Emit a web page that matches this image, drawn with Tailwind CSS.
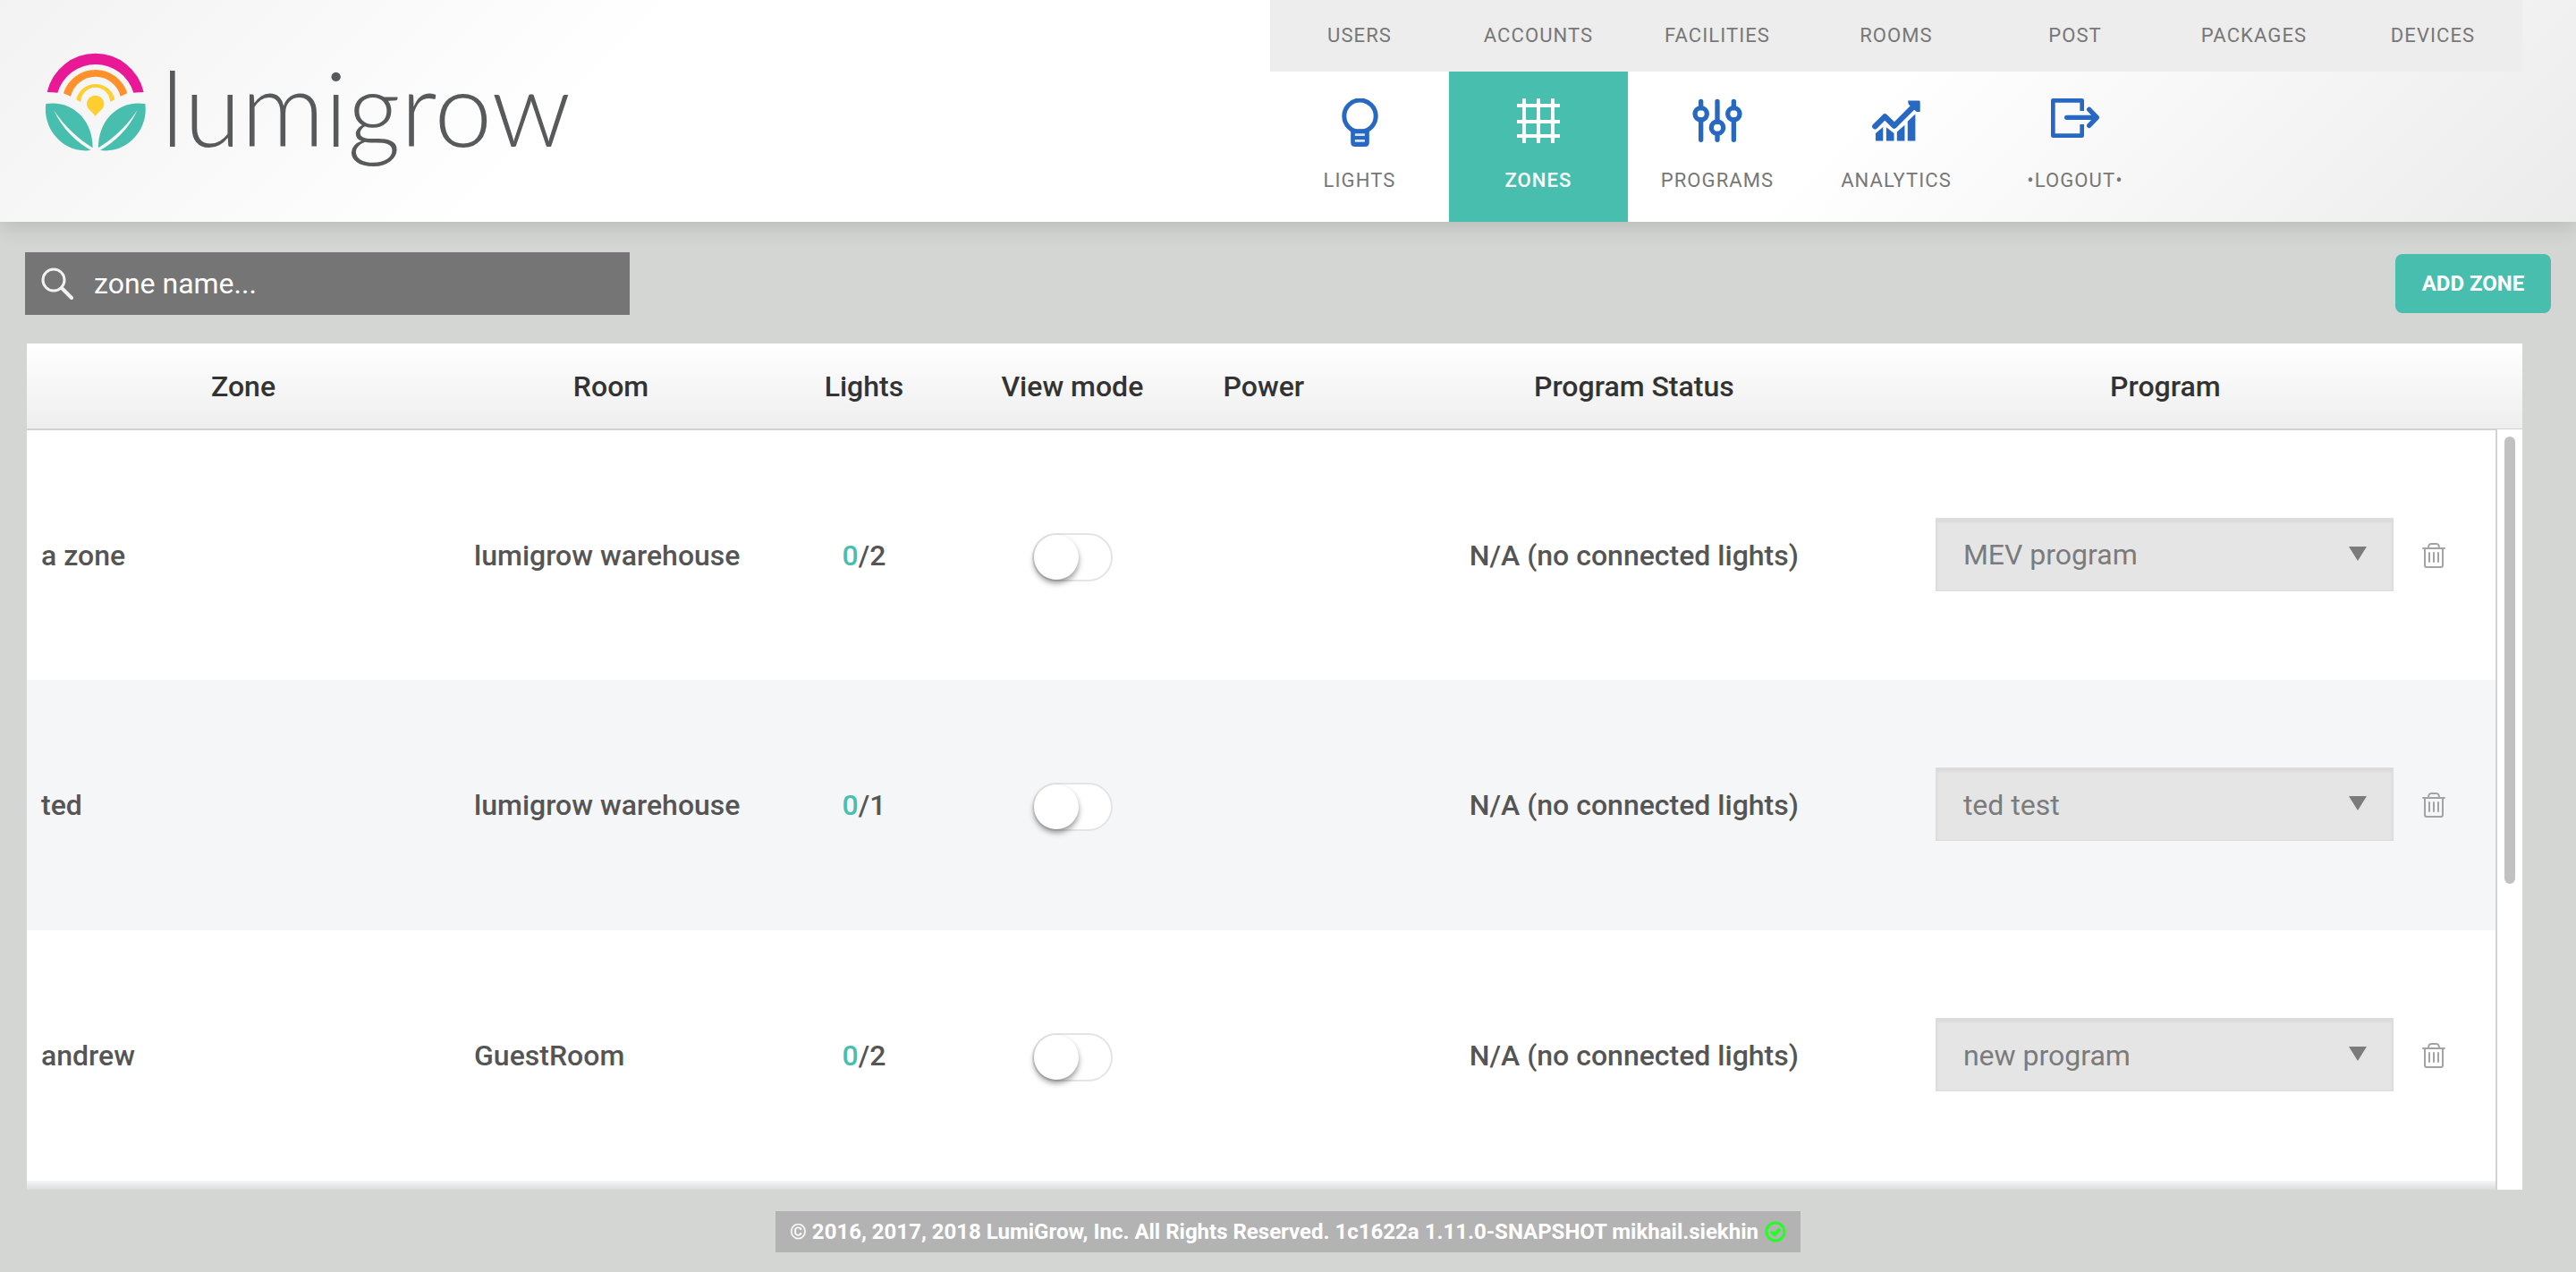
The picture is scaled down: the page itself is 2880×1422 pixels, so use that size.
<!DOCTYPE html>
<html lang="en">
<head>
<meta charset="utf-8">
<meta name="viewport" content="width=device-width, initial-scale=1">
<title>LumiGrow - Zones</title>
<script src="https://cdn.jsdelivr.net/npm/@tailwindcss/browser@4"></script>
</head>
<body class="flex min-h-screen flex-col bg-[#d4d6d4] font-['Roboto',sans-serif] text-[#555]">

<header class="relative flex justify-between bg-[linear-gradient(135deg,#f2f2f2_0%,#fff_25%,#fff_70%,#ebebeb_100%)] pr-[60px] shadow-[0_4px_24px_rgba(0,0,0,0.15)]">
  <a href="#" class="flex items-start pt-[50px] pl-10" aria-label="lumigrow">
    <svg class="h-[130px] w-[140px]" viewBox="0 0 420 390" aria-hidden="true">
      <path d="M38 159A166 166 0 0 1 362 159Q344 160 328 161A133 133 0 0 0 73 161Q56 160 38 159Z" fill="#e81896"/>
      <path d="M93 163A112 112 0 0 1 307 163L284 173A86 86 0 0 0 117 173Z" fill="#ff912d"/>
      <path d="M136 184A66 66 0 0 1 265 184L249 192A49 49 0 0 0 151 192Z" fill="#ffce2f"/>
      <path d="M200 170C217 170 229 183 229 198C229 218 210 222 200 240C190 222 171 218 171 198C171 183 183 170 200 170Z" fill="#ffce2f"/>
      <path d="M34 198C120 184 192 250 191 346C150 320 100 280 60 219C90 284 135 325 185 354C95 366 22 285 34 198Z" fill="#48beae"/>
      <path d="M367 198C281 184 209 250 210 346C251 320 301 280 341 219C311 284 266 325 216 354C306 366 379 285 367 198Z" fill="#48beae"/>
    </svg>
    <span class="font-['Lato',sans-serif] text-[116px] leading-[140px] font-light text-[#58595b]">lumigrow</span>
  </a>

  <nav class="w-[1400px] text-[22px] leading-7 tracking-wider text-[#777]">
    <ul class="grid h-20 grid-cols-7 items-center bg-[#ededed] text-center">
      <li><a href="#">USERS</a></li>
      <li><a href="#">ACCOUNTS</a></li>
      <li><a href="#">FACILITIES</a></li>
      <li><a href="#">ROOMS</a></li>
      <li><a href="#">POST</a></li>
      <li><a href="#">PACKAGES</a></li>
      <li><a href="#">DEVICES</a></li>
    </ul>
    <ul class="grid h-[168px] grid-cols-7 text-center">
      <li><a href="#" class="flex h-full flex-col items-center gap-6 pt-[30px]">
        <span class="h-[54px]"><svg class="h-[54px] w-[41px]" viewBox="60 45 122 162" fill="none" stroke="#2768c2" aria-hidden="true">
          <circle cx="121" cy="104" r="53" stroke-width="15"/>
          <path d="M90 148H152V192Q152 207 138 207H104Q90 207 90 192Z" fill="#2768c2" stroke="none"/>
          <path d="M104 167H137M104 187H137" stroke="#d9e6f8" stroke-width="8"/>
        </svg></span>LIGHTS</a></li>
      <li><a href="#" aria-current="page" class="flex h-full flex-col items-center gap-6 bg-[#48beae] pt-[30px] font-medium text-white">
        <span class="h-[54px]"><svg class="h-[50px] w-12" viewBox="0 0 144 150" fill="none" stroke="#fff" stroke-width="12" aria-hidden="true">
          <path d="M24 0V150M72 0V150M120 0V150M0 24H144M0 78H144M0 126H144"/>
        </svg></span>ZONES</a></li>
      <li><a href="#" class="flex h-full flex-col items-center gap-6 pt-[30px]">
        <span class="h-[54px]"><svg class="h-[50px] w-14" viewBox="1235 45 168 150" fill="none" stroke="#2768c2" stroke-width="16" stroke-linecap="round" aria-hidden="true">
          <circle cx="1264" cy="97" r="20"/><circle cx="1319" cy="143" r="20"/><circle cx="1374" cy="97" r="20"/>
          <path d="M1264 55V77M1264 117V184M1319 55V123M1319 163V184M1374 55V77M1374 117V184"/>
        </svg></span>PROGRAMS</a></li>
      <li><a href="#" class="flex h-full flex-col items-center gap-6 pt-[30px]">
        <span class="h-[54px]"><svg class="h-[50px] w-[54px]" viewBox="156 45 163 150" fill="#2768c2" aria-hidden="true">
          <path d="M166 139L199 106L231 137L300 68" fill="none" stroke="#2768c2" stroke-width="19" stroke-linecap="round" stroke-linejoin="round"/>
          <path d="M277 52H314Q318 52 318 56V90L306 90L279 64Z"/>
          <path d="M168 162L193 141V188H168ZM204 142L230 162V188H204ZM240 158L266 134V188H240ZM276 122L302 97V188H276Z"/>
        </svg></span>ANALYTICS</a></li>
      <li><a href="#" class="flex h-full flex-col items-center gap-6 pt-[30px]">
        <span class="h-[54px]"><svg class="h-[44px] w-[54px]" viewBox="762 45 162 132" fill="none" stroke="#2768c2" stroke-width="14" stroke-linejoin="round" aria-hidden="true">
          <path d="M866 87V52H769V170H866V132"/>
          <path d="M815 109H914M890 82L916 109L890 136" stroke-width="16" stroke-linecap="round"/>
        </svg></span>•LOGOUT•</a></li>
    </ul>
  </nav>
</header>

<main class="flex flex-col">
  <div class="flex items-center justify-between px-7 pt-[34px] pb-8">
    <label class="flex h-[70px] w-[676px] items-center gap-[23px] bg-[#757575] pl-[18px]">
      <svg class="size-9 shrink-0" viewBox="0 0 36 36" fill="none" stroke="#f2f2f2" stroke-linecap="round" aria-hidden="true">
        <circle cx="14" cy="14" r="12" stroke-width="3"/><path d="M23 23L34 34" stroke-width="4"/>
      </svg>
      <input type="text" placeholder="zone name..." aria-label="Zone name" class="min-w-0 flex-1 bg-transparent text-[32px] leading-10 text-white outline-none placeholder:text-white">
    </label>
    <button type="button" class="h-[66px] w-[174px] rounded-lg bg-[#48beae] text-2xl font-bold text-white">ADD ZONE</button>
  </div>

  <section class="relative mr-[60px] ml-[30px]">
    <table class="w-full table-fixed text-left text-[32px] leading-10 font-medium">
      <colgroup>
        <col class="w-[17.35%]"><col class="w-[12.11%]"><col class="w-[8.17%]"><col class="w-[8.53%]"><col class="w-[6.81%]"><col class="w-[22.87%]"><col class="w-[19.71%]"><col>
      </colgroup>
      <thead class="bg-linear-to-b from-white to-[#eee] text-center text-[#333]">
        <tr class="h-24 border-b-2 border-[#d2d2d2]">
          <th class="font-medium">Zone</th>
          <th class="font-medium">Room</th>
          <th class="font-medium">Lights</th>
          <th class="font-medium">View mode</th>
          <th class="font-medium">Power</th>
          <th class="font-medium">Program Status</th>
          <th class="font-medium">Program</th>
          <td></td>
        </tr>
      </thead>
      <tbody>
        <tr class="h-[280px] bg-white">
          <td class="pl-4">a zone</td>
          <td class="pl-4">lumigrow warehouse</td>
          <td class="text-center"><span class="text-[#48beae]">0</span>/2</td>
          <td><label class="mx-auto mt-1 flex h-[54px] w-[90px] cursor-pointer rounded-full border-2 border-[#e4e4e4] bg-white">
            <input type="checkbox" aria-label="View mode for a zone" class="size-[50px] appearance-none rounded-full bg-white shadow-[0_4px_6px_rgba(0,0,0,0.4)] checked:ml-auto"></label></td>
          <td></td>
          <td class="text-center">N/A (no connected lights)</td>
          <td class="pr-5 pb-[2px] pl-[18px]"><div class="relative flex">
            <select aria-label="Program for a zone" class="h-[82px] w-full appearance-none border border-t-2 border-[#dcdcdc] bg-[#e5e5e5] pl-[30px] font-normal text-[#7b7b7b] shadow-[inset_0_2px_4px_rgba(0,0,0,0.06)]"><option>MEV program</option></select>
            <svg class="pointer-events-none absolute top-8 right-[30px] h-4 w-5" viewBox="0 0 20 16" aria-hidden="true"><path d="M0 0H20L10 16Z" fill="#7b7b7b"/></svg>
          </div></td>
          <td class="pl-3"><button type="button" aria-label="Delete a zone" class="block"><svg class="h-7 w-[26px]" viewBox="0 0 26 28" fill="none" stroke="#a3a3a3" stroke-width="2" stroke-linecap="round" aria-hidden="true"><path d="M1 6H25M3 6V25Q3 27 5 27H21Q23 27 23 25V6M7 6Q7 1 10 1H16Q19 1 19 6M8 11V21M13 11V21M18 11V21"/></svg></button></td>
        </tr>
        <tr class="h-[280px] bg-[#f5f6f8]">
          <td class="pl-4">ted</td>
          <td class="pl-4">lumigrow warehouse</td>
          <td class="text-center"><span class="text-[#48beae]">0</span>/1</td>
          <td><label class="mx-auto mt-1 flex h-[54px] w-[90px] cursor-pointer rounded-full border-2 border-[#e4e4e4] bg-white">
            <input type="checkbox" aria-label="View mode for ted" class="size-[50px] appearance-none rounded-full bg-white shadow-[0_4px_6px_rgba(0,0,0,0.4)] checked:ml-auto"></label></td>
          <td></td>
          <td class="text-center">N/A (no connected lights)</td>
          <td class="pr-5 pb-[2px] pl-[18px]"><div class="relative flex">
            <select aria-label="Program for ted" class="h-[82px] w-full appearance-none border border-t-2 border-[#dcdcdc] bg-[#e5e5e5] pl-[30px] font-normal text-[#7b7b7b] shadow-[inset_0_2px_4px_rgba(0,0,0,0.06)]"><option>ted test</option></select>
            <svg class="pointer-events-none absolute top-8 right-[30px] h-4 w-5" viewBox="0 0 20 16" aria-hidden="true"><path d="M0 0H20L10 16Z" fill="#7b7b7b"/></svg>
          </div></td>
          <td class="pl-3"><button type="button" aria-label="Delete ted" class="block"><svg class="h-7 w-[26px]" viewBox="0 0 26 28" fill="none" stroke="#a3a3a3" stroke-width="2" stroke-linecap="round" aria-hidden="true"><path d="M1 6H25M3 6V25Q3 27 5 27H21Q23 27 23 25V6M7 6Q7 1 10 1H16Q19 1 19 6M8 11V21M13 11V21M18 11V21"/></svg></button></td>
        </tr>
        <tr class="h-[280px] bg-white">
          <td class="pl-4">andrew</td>
          <td class="pl-4">GuestRoom</td>
          <td class="text-center"><span class="text-[#48beae]">0</span>/2</td>
          <td><label class="mx-auto mt-1 flex h-[54px] w-[90px] cursor-pointer rounded-full border-2 border-[#e4e4e4] bg-white">
            <input type="checkbox" aria-label="View mode for andrew" class="size-[50px] appearance-none rounded-full bg-white shadow-[0_4px_6px_rgba(0,0,0,0.4)] checked:ml-auto"></label></td>
          <td></td>
          <td class="text-center">N/A (no connected lights)</td>
          <td class="pr-5 pb-[2px] pl-[18px]"><div class="relative flex">
            <select aria-label="Program for andrew" class="h-[82px] w-full appearance-none border border-t-2 border-[#dcdcdc] bg-[#e5e5e5] pl-[30px] font-normal text-[#7b7b7b] shadow-[inset_0_2px_4px_rgba(0,0,0,0.06)]"><option>new program</option></select>
            <svg class="pointer-events-none absolute top-8 right-[30px] h-4 w-5" viewBox="0 0 20 16" aria-hidden="true"><path d="M0 0H20L10 16Z" fill="#7b7b7b"/></svg>
          </div></td>
          <td class="pl-3"><button type="button" aria-label="Delete andrew" class="block"><svg class="h-7 w-[26px]" viewBox="0 0 26 28" fill="none" stroke="#a3a3a3" stroke-width="2" stroke-linecap="round" aria-hidden="true"><path d="M1 6H25M3 6V25Q3 27 5 27H21Q23 27 23 25V6M7 6Q7 1 10 1H16Q19 1 19 6M8 11V21M13 11V21M18 11V21"/></svg></button></td>
        </tr>
      </tbody>
    </table>
    <div class="h-[10px] bg-linear-to-b from-[#f5f6f8] to-[#dcdcdd]"></div>
    <!-- scroll track -->
    <div class="absolute top-24 right-0 bottom-0 w-[30px] border-l-2 border-[#d2d2d2] bg-white px-2 pt-2">
      <div class="h-[500px] w-3 rounded-full bg-[#c1c1c1]"></div>
    </div>
  </section>
</main>

<footer class="flex justify-center pt-6">
  <p class="flex h-[46px] items-center gap-[7px] bg-[#b3b3b3] px-4 text-2xl font-bold text-white">
    © 2016, 2017, 2018 LumiGrow, Inc. All Rights Reserved. 1c1622a 1.11.0-SNAPSHOT mikhail.siekhin
    <svg class="size-6" viewBox="0 0 24 24" fill="none" stroke="#22ff22" aria-hidden="true"><circle cx="12" cy="12" r="10" stroke-width="3"/><path d="M7 12L11 15L17 9" stroke-width="4"/></svg>
  </p>
</footer>
</body>
</html>
